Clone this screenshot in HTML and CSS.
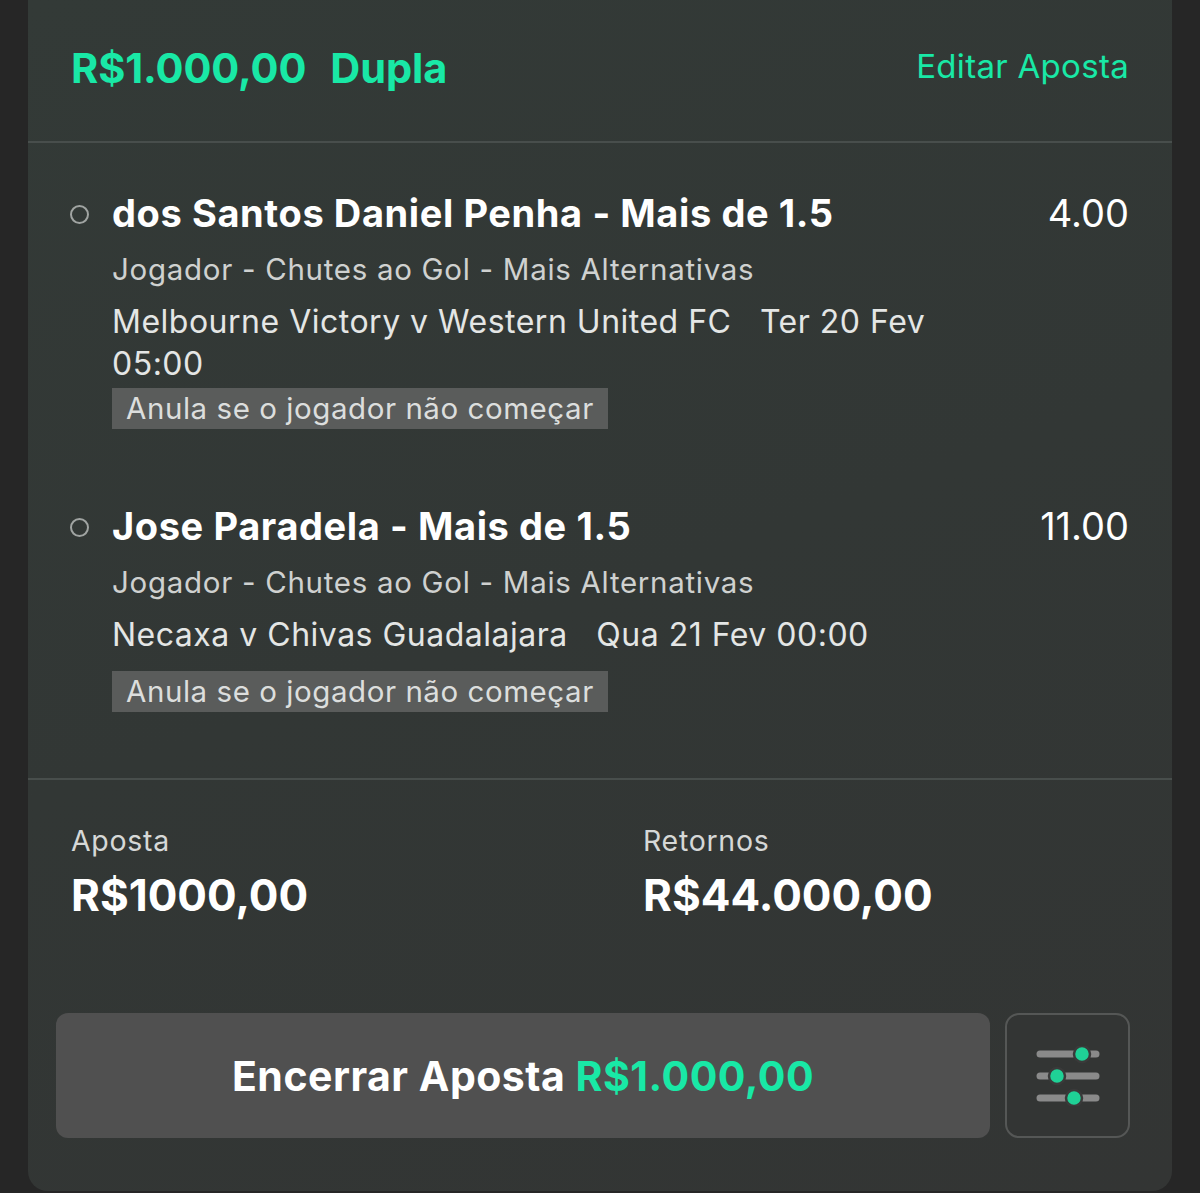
FILE: index.html
```html
<!DOCTYPE html>
<html lang="pt-BR">
<head>
<meta charset="utf-8">
<link rel="stylesheet" href="styles.css">
</head>
<body>
<div class="card">
  <header class="head">
    <div class="head-title"><span>R$1.000,00</span><span>Dupla</span></div>
    <div class="edit">Editar Aposta</div>
  </header>
  <section class="legs">
    <div class="leg">
      <span class="dot"></span>
      <div class="leg-body">
        <div class="leg-top">
          <div class="leg-name">dos Santos Daniel Penha - Mais de 1.5</div>
          <div class="odds">4.00</div>
        </div>
        <div class="market">Jogador - Chutes ao Gol - Mais Alternativas</div>
        <div class="event">Melbourne Victory v Western United FC&nbsp;&nbsp; Ter 20 Fev 05:00</div>
        <div class="badge">Anula se o jogador não começar</div>
      </div>
    </div>
    <div class="leg leg2">
      <span class="dot"></span>
      <div class="leg-body">
        <div class="leg-top">
          <div class="leg-name">Jose Paradela - Mais de 1.5</div>
          <div class="odds">11.00</div>
        </div>
        <div class="market">Jogador - Chutes ao Gol - Mais Alternativas</div>
        <div class="event">Necaxa v Chivas Guadalajara&nbsp;&nbsp; Qua 21 Fev 00:00</div>
        <div class="badge">Anula se o jogador não começar</div>
      </div>
    </div>
  </section>
  <section class="totals">
    <div class="tot">
      <div class="tot-label">Aposta</div>
      <div class="tot-value">R$1000,00</div>
    </div>
    <div class="tot">
      <div class="tot-label">Retornos</div>
      <div class="tot-value">R$44.000,00</div>
    </div>
  </section>
  <section class="actions">
    <button class="cashout">Encerrar Aposta <span class="green">R$1.000,00</span></button>
    <button class="settings" aria-label="Configurações">
      <svg width="64" height="60" viewBox="0 0 64 60">
        <g stroke="#8a8a8a" stroke-width="7" stroke-linecap="round">
          <line x1="4" y1="8" x2="60" y2="8"/>
          <line x1="4" y1="30" x2="60" y2="30"/>
          <line x1="4" y1="52" x2="60" y2="52"/>
        </g>
        <g fill="#1fd196" stroke="#3a3a3a" stroke-width="2.5">
          <circle cx="46" cy="8" r="8"/>
          <circle cx="21" cy="30" r="8"/>
          <circle cx="38" cy="52" r="8"/>
        </g>
      </svg>
    </button>
  </section>
</div>
</body>
</html>
```

FILE: styles.css
```css
html, body {
  margin: 0;
  padding: 0;
  background: #262626;
}
body {
  width: 1200px;
  height: 1193px;
  overflow: hidden;
  font-family: Inter, "Noto Sans", "Liberation Sans", sans-serif;
  -webkit-font-smoothing: antialiased;
}
.card {
  margin: 0 28px;
  width: 1144px;
  height: 1191px;
  background: linear-gradient(160deg, #333a37 0%, #323735 50%, #333534 100%);
  border-radius: 0 0 20px 20px;
  box-sizing: border-box;
  display: flex;
  flex-direction: column;
}
.head {
  height: 141px;
  border-bottom: 2px solid #484e4c;
  display: flex;
  align-items: center;
  justify-content: space-between;
  padding: 0 43px 0 43px;
  box-sizing: content-box;
}
.head-title {
  display: flex;
  gap: 24px;
  color: #19e8a6;
  font-weight: 700;
  font-size: 41.5px;
  letter-spacing: -0.1px;
  margin-top: -6px;
}
.edit {
  color: #19e8a6;
  font-size: 33px;
  font-weight: 400;
  letter-spacing: 0.3px;
  margin-top: -10px;
}
.legs {
  height: 635px;
  border-bottom: 2px solid #484e4c;
  padding: 0 43px 0 42px;
}
.leg {
  display: flex;
  gap: 23px;
  padding-top: 44px;
}
.leg2 {
  padding-top: 71px;
}
.dot {
  flex: none;
  width: 15px;
  height: 15px;
  border: 2.5px solid #a0a4a2;
  border-radius: 50%;
  margin-top: 18px;
}
.leg-body {
  flex: 1;
}
.leg-top {
  display: flex;
  justify-content: space-between;
  align-items: baseline;
}
.leg-name {
  color: #fff;
  font-weight: 700;
  font-size: 38px;
  letter-spacing: 0.6px;
  line-height: 52px;
}
.odds {
  color: #fff;
  font-size: 38px;
  font-weight: 400;
  line-height: 52px;
}
.market {
  color: #cfd1d0;
  font-size: 29.5px;
  line-height: 40px;
  margin-top: 10px;
  letter-spacing: 0.7px;
}
.event {
  color: #e4e6e5;
  font-size: 32px;
  line-height: 42px;
  margin-top: 12px;
  max-width: 860px;
  letter-spacing: 0.5px;
}
.badge {
  display: inline-block;
  background: #5a5c5b;
  color: #dcdedd;
  font-size: 29.5px;
  line-height: 41px;
  padding: 0 14px;
  margin-top: 3px;
  letter-spacing: 0.55px;
}
.leg2 .badge { margin-top: 15px; }
.totals {
  display: flex;
  padding: 43px 43px 0 43px;
  height: 188px;
  box-sizing: border-box;
}
.tot {
  flex: none;
  width: 572px;
}
.tot + .tot {
  flex: 1;
  width: auto;
}
.tot-label {
  color: #d6d8d7;
  font-size: 28.5px;
  line-height: 36px;
  letter-spacing: 0.7px;
}
.tot-value {
  color: #fff;
  font-weight: 700;
  font-size: 44px;
  line-height: 56px;
  margin-top: 8px;
}
.actions {
  display: flex;
  gap: 15px;
  padding: 45px 42px 0 28px;
}
.cashout {
  flex: 1;
  height: 125px;
  border: none;
  border-radius: 12px;
  background: #505050;
  color: #fff;
  font-family: inherit;
  font-weight: 700;
  font-size: 41px;
  letter-spacing: 0.5px;
  padding: 0;
}
.green {
  color: #19e8a6;
}
.settings {
  flex: none;
  width: 125px;
  height: 125px;
  box-sizing: border-box;
  border: 2.5px solid #555756;
  border-radius: 14px;
  background: #333534;
  display: flex;
  align-items: center;
  justify-content: center;
  padding: 0;
}
```
